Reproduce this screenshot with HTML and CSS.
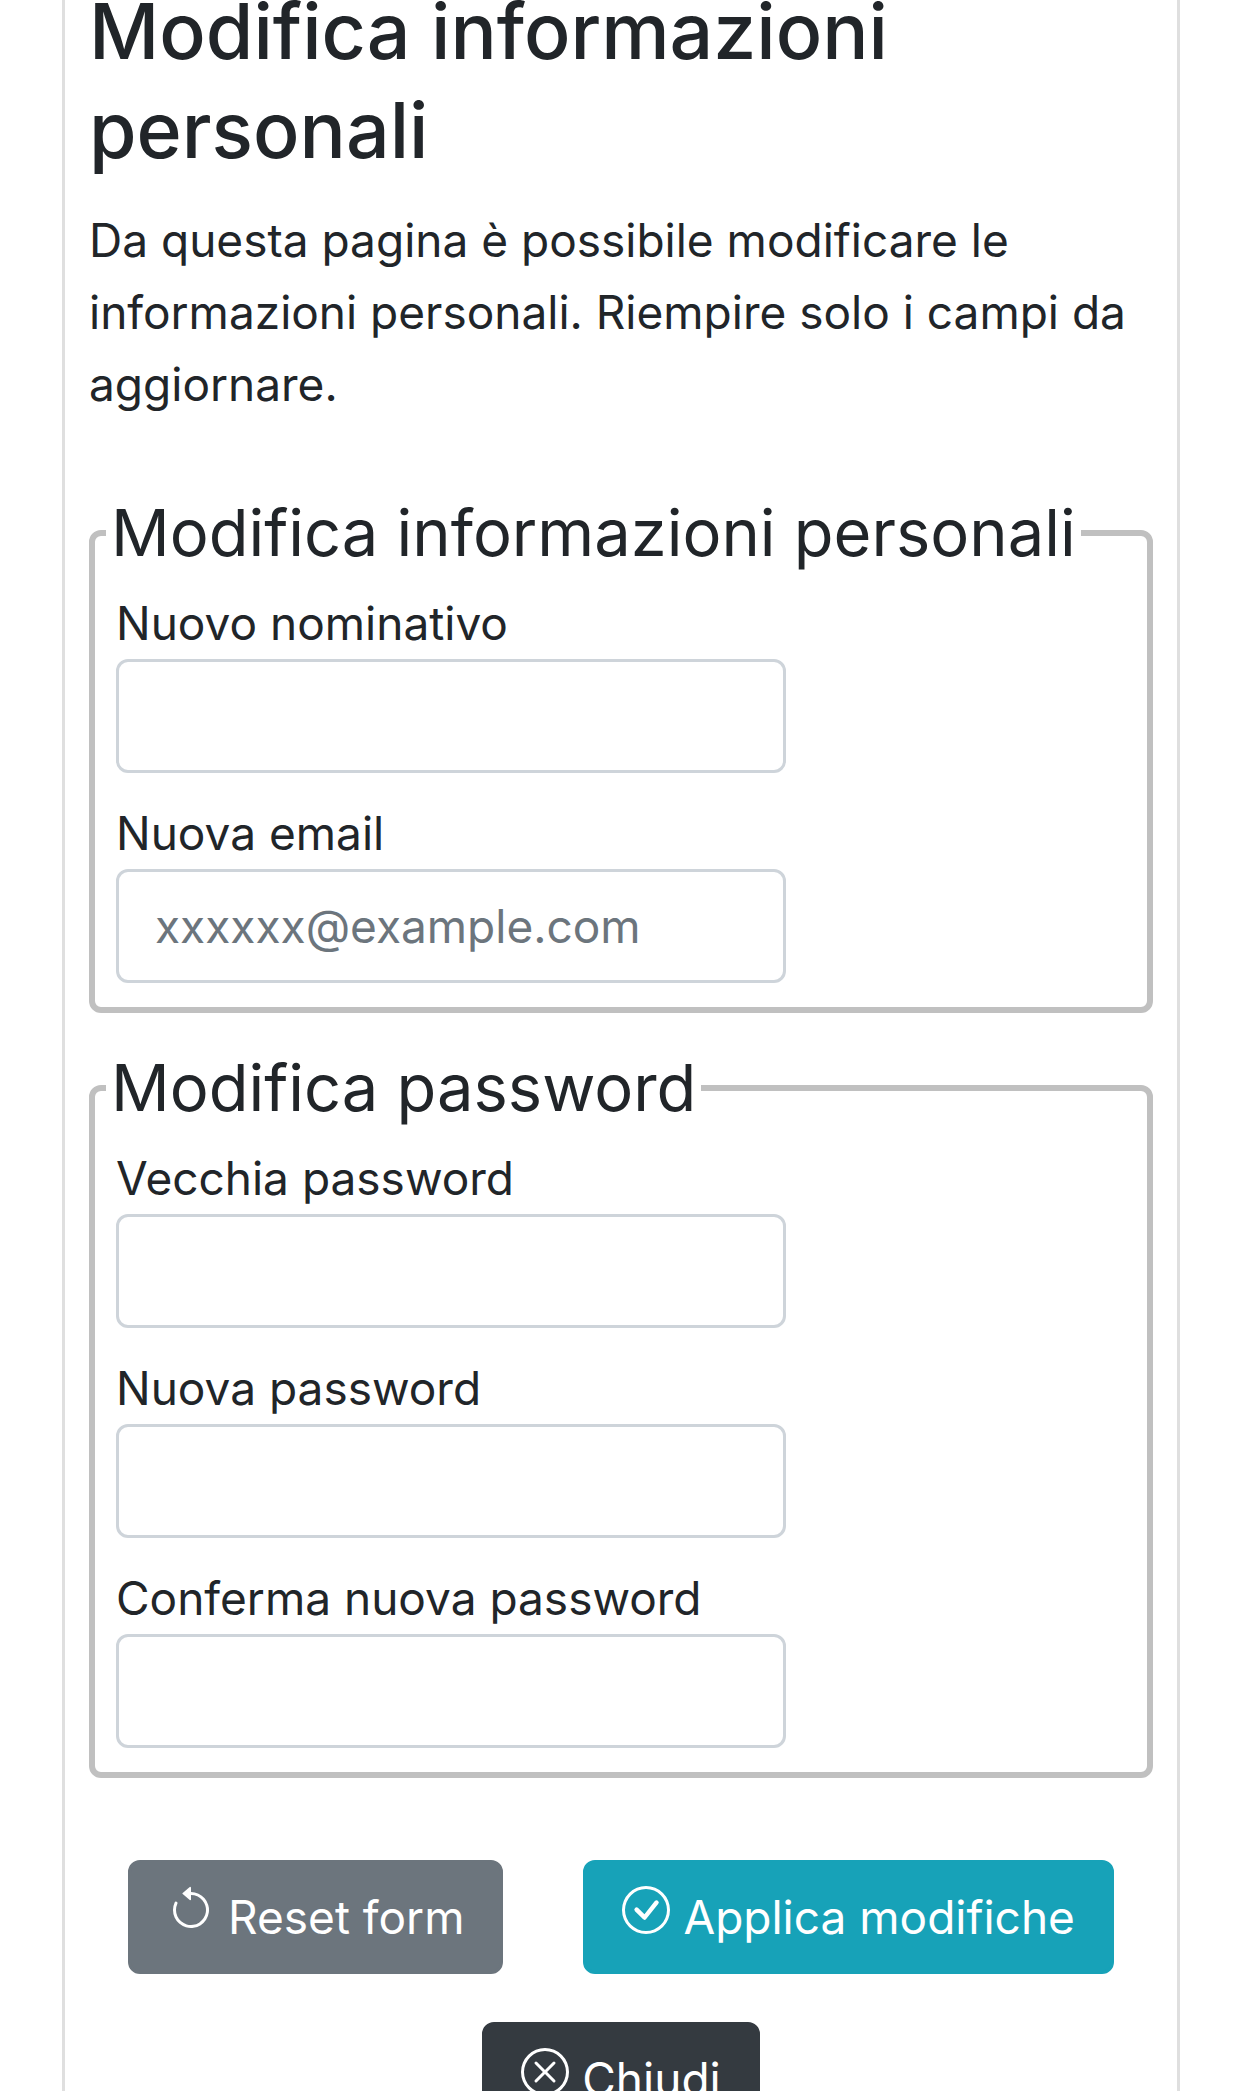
FILE: index.html
```html
<!DOCTYPE html>
<html lang="it">
<head>
<meta charset="utf-8">
<meta name="viewport" content="width=device-width, initial-scale=1">
<title>Modifica informazioni personali</title>
<link rel="stylesheet" href="styles.css">
</head>
<body>
<main class="card">
  <h1 class="title">Modifica informazioni personali</h1>
  <p class="intro">Da questa pagina è possibile modificare le informazioni personali. Riempire solo i campi da aggiornare.</p>
  <form class="form">
    <fieldset class="group">
      <legend class="legend">Modifica informazioni personali</legend>
      <div class="fields">
        <div class="field">
          <label for="name">Nuovo nominativo</label>
          <input class="control" id="name" type="text">
        </div>
        <div class="field">
          <label for="email">Nuova email</label>
          <input class="control" id="email" type="email" placeholder="xxxxxx@example.com">
        </div>
      </div>
    </fieldset>
    <fieldset class="group">
      <legend class="legend">Modifica password</legend>
      <div class="fields">
        <div class="field">
          <label for="old-password">Vecchia password</label>
          <input class="control" id="old-password" type="password">
        </div>
        <div class="field">
          <label for="new-password">Nuova password</label>
          <input class="control" id="new-password" type="password">
        </div>
        <div class="field">
          <label for="confirm-password">Conferma nuova password</label>
          <input class="control" id="confirm-password" type="password">
        </div>
      </div>
    </fieldset>
    <div class="actions">
      <button class="btn btn-secondary" type="reset"><svg class="icon" viewBox="0 0 16 16" aria-hidden="true"><path fill-rule="evenodd" d="M8 3a5 5 0 1 1-4.546 2.914.5.5 0 0 0-.908-.417A6 6 0 1 0 8 2v1z"/><path d="M8 4.466V.534a.25.25 0 0 0-.41-.192L5.23 2.308a.25.25 0 0 0 0 .384l2.36 1.966A.25.25 0 0 0 8 4.466z"/></svg> Reset form</button>
      <button class="btn btn-info" type="submit"><svg class="icon" viewBox="0 0 16 16" aria-hidden="true"><path d="M8 15A7 7 0 1 1 8 1a7 7 0 0 1 0 14zm0 1A8 8 0 1 0 8 0a8 8 0 0 0 0 16z"/><path d="M10.97 4.97a.235.235 0 0 0-.02.022L7.477 9.417 5.384 7.323a.75.75 0 0 0-1.06 1.06L6.97 11.03a.75.75 0 0 0 1.079-.02l3.992-4.99a.75.75 0 0 0-1.071-1.05z"/></svg> Applica modifiche</button>
      <button class="btn btn-dark" type="button"><svg class="icon" viewBox="0 0 16 16" aria-hidden="true"><path d="M8 15A7 7 0 1 1 8 1a7 7 0 0 1 0 14zm0 1A8 8 0 1 0 8 0a8 8 0 0 0 0 16z"/><path d="M4.646 4.646a.5.5 0 0 1 .708 0L8 7.293l2.646-2.647a.5.5 0 0 1 .708.708L8.707 8l2.647 2.646a.5.5 0 0 1-.708.708L8 8.707l-2.646 2.647a.5.5 0 0 1-.708-.708L7.293 8 4.646 5.354a.5.5 0 0 1 0-.708z"/></svg> Chiudi</button>
    </div>
  </form>
</main>
</body>
</html>
```
FILE: styles.css
```css
* { box-sizing: border-box; }

body {
  margin: 0;
  height: 100vh;
  overflow: hidden;
  background: #fff;
  color: #212529;
  font: 400 46px/72px Inter, "Liberation Sans", sans-serif;
}

/* The card sits partly scrolled past the top of the window. */
.card {
  margin: -18px 62px 0;
  padding: 0 24px 48px;
  border: 3px solid #dfdfdf;
  border-width: 0 3px;
}

.title {
  margin: 0 0 24px;
  font-size: 77px;
  line-height: 99px;
  font-weight: 500;
}

.intro { margin: 0 0 70px; }

.group {
  min-width: 0;
  margin: 0 0 32px;
  padding: 11px 11px 24px;
  border: 6px solid #c0c0c0;
  border-radius: 12px;
}

.legend {
  padding: 0 5px;
  font-size: 65px;
  line-height: 86px;
}

.fields {
  display: flex;
  flex-direction: column;
  gap: 24px;
  padding: 0 10px;
}

.field {
  display: flex;
  flex-direction: column;
}

.control {
  width: 670px;
  max-width: 100%;
  height: 114px;
  padding: 18px 36px;
  border: 3px solid #ced4da;
  border-radius: 12px;
  background: #fff;
  color: #495057;
  font: inherit;
}

.control::placeholder {
  color: #6c757d;
  opacity: 1;
}

.actions {
  display: flex;
  flex-wrap: wrap;
  justify-content: center;
  gap: 48px 80px;
  padding-top: 50px;
}

.btn {
  padding: 18px 36px;
  border: 3px solid transparent;
  border-radius: 12px;
  color: #fff;
  font: inherit;
  white-space: nowrap;
}

.btn-secondary { background: #6c757d; border-color: #6c757d; }
.btn-info { background: #17a2b8; border-color: #17a2b8; }
.btn-dark { background: #343a40; border-color: #343a40; }

.icon {
  width: 48px;
  height: 48px;
  fill: currentColor;
}
```
